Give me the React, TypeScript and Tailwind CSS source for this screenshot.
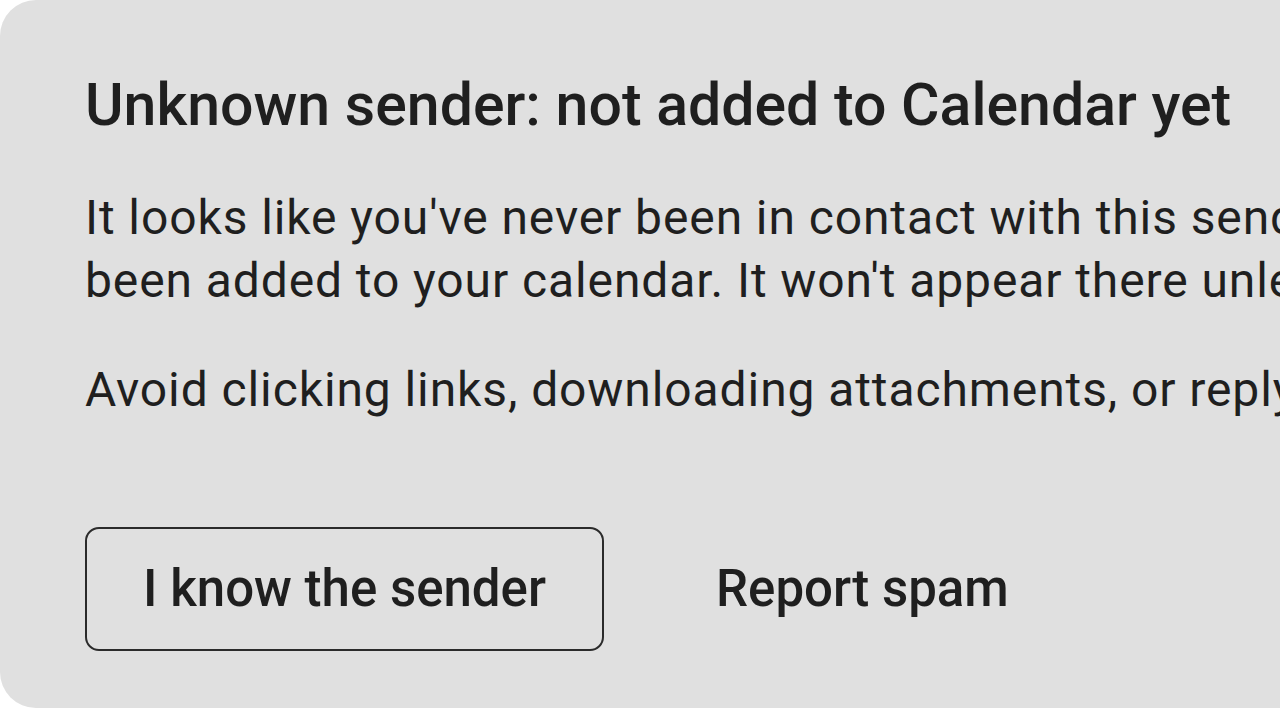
export default function App() {
  return (
    <div className="h-[708px] w-[1280px] overflow-hidden bg-white" style={{ fontFamily: 'Roboto, "Noto Sans", sans-serif' }}>
      <div className="flex h-[708px] w-[1600px] flex-col rounded-l-[36px] bg-[#e0e0e0] pl-[85px] pt-[72px] text-[#1f1f1f]">
        <h1 className="whitespace-nowrap text-[59px] font-medium leading-[66px]">Unknown sender: not added to Calendar yet</h1>
        <p className="mt-[48px] whitespace-nowrap text-[48px] leading-[63px] tracking-[0.9px]">
          It looks like you've never been in contact with this sender, so this invitation hasn't
          <br />
          been added to your calendar. It won't appear there unless you confirm you know the sender.
        </p>
        <p className="mt-[46px] whitespace-nowrap text-[48px] leading-[63px] tracking-[0.9px]">
          Avoid clicking links, downloading attachments, or replying with personal information.
        </p>
        <div className="mt-[106px] flex items-center gap-[56px]">
          <button className="flex h-[124px] w-[519px] items-center justify-center rounded-[14px] border-2 border-[#2b2b2b] text-[51px] font-medium">
            I know the sender
          </button>
          <button className="px-[56px] text-[51px] font-medium">Report spam</button>
        </div>
      </div>
    </div>
  )
}
